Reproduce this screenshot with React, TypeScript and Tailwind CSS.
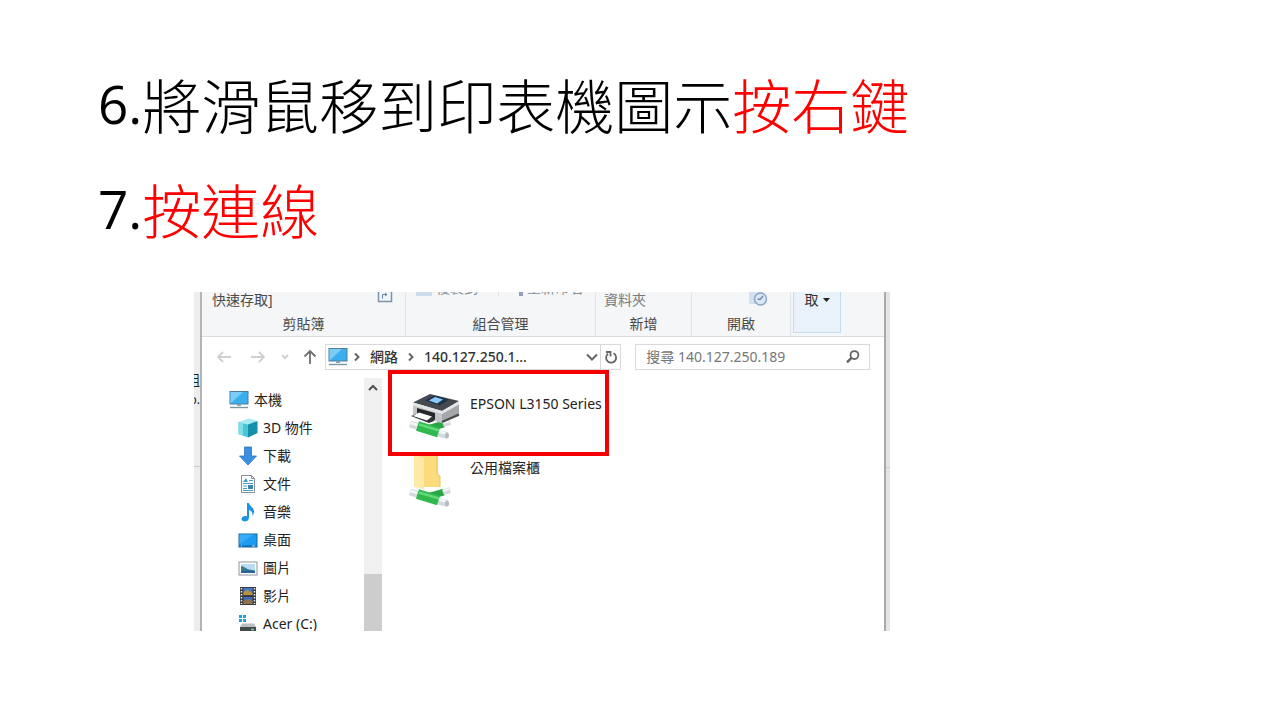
import type { ReactNode } from "react";

const Monitor = ({ className }: { className?: string }) => (
  <svg viewBox="0 0 20 18" className={className} aria-hidden="true">
    <rect x="1" y="0.5" width="18" height="12.5" fill="#3aaeee" stroke="#4d7f9e" />
    <path d="M1.5 12.5V1H14z" fill="#7cccf8" />
    <path d="M8 13h4v2H8z" fill="#8ba3b1" />
    <path d="M1 16.5h18" stroke="#7c95a3" strokeWidth="1.4" />
  </svg>
);

const Cube = () => (
  <svg viewBox="0 0 20 20" className="size-5" aria-hidden="true">
    <path d="M0.500 4L11 0.500 19.500 3 10 6.500z" fill="#a6ecf2" />
    <path d="M0.500 4L10 6.500v13L0.500 16z" fill="#49c5d8" />
    <path d="M0.500 4l4.500 1.200v12.500L0.500 16z" fill="#83dce6" />
    <path d="M10 6.500L19.500 3v12L10 19.500z" fill="#168fa8" />
  </svg>
);

const Download = () => (
  <svg viewBox="0 0 20 20" className="size-5" aria-hidden="true">
    <path d="M6.500 1h7v9h5L10 19 1.500 10h5z" fill="#3a8fe0" stroke="#2f74bd" strokeWidth="0.8" />
  </svg>
);

const Doc = () => (
  <svg viewBox="0 0 20 20" className="size-5" aria-hidden="true">
    <path d="M3.500 1.500h10l3 3v14h-13z" fill="#fff" stroke="#8a8f93" />
    <path d="M13.500 1.500v3h3" fill="none" stroke="#8a8f93" />
    <path d="M5 8l3-4 2 4z" fill="#3b9dc9" />
    <path d="M5 9.500h10M11 6.500h4M5 12h4M5 14.500h4M5 16.500h10" stroke="#4b9dc0" strokeWidth="1.2" />
    <path d="M10 11h5v4h-5z" fill="#3b86ad" />
  </svg>
);

const Note = () => (
  <svg viewBox="0 0 20 20" className="size-5" aria-hidden="true">
    <path d="M9 1h2c.5 3 5 4.500 5 8.500 0 2-.8 3.500-1.800 4.500.8-3-.2-5-3.200-6v7.500C11 18 9 19.500 6.800 19.500 4.800 19.500 3.500 18.500 3.500 17c0-2 2.500-3.300 5.500-2.800z" fill="#1b95e0" />
  </svg>
);

const Desktop = () => (
  <svg viewBox="0 0 20 20" className="size-5" aria-hidden="true">
    <rect x="1" y="4" width="18" height="13" fill="#1c9bf0" stroke="#17699f" />
    <path d="M1.500 14V4.500H16z" fill="#38acf6" />
    <path d="M1.500 16h17" stroke="#0d5f9c" />
    <path d="M3 16h1M14 16h3" stroke="#bfe4ff" />
  </svg>
);

const Picture = () => (
  <svg viewBox="0 0 20 20" className="size-5" aria-hidden="true">
    <rect x="1" y="4" width="18" height="13" fill="#fff" stroke="#8f959a" />
    <rect x="3" y="6" width="14" height="9" fill="#b9dcf3" />
    <path d="M3 8c3 0 5 3 8 3.500l6 1v2.500H3z" fill="#3a7c8e" />
    <path d="M3 13c5-1 9-.5 14 0v2H3z" fill="#2a62a0" />
  </svg>
);

const Film = () => (
  <svg viewBox="0 0 20 20" className="size-5" aria-hidden="true">
    <rect x="2" y="1" width="16" height="18" fill="#393b40" />
    <path d="M3.500 2v16M16.500 2v16" stroke="#e7e7e7" strokeWidth="1.500" strokeDasharray="1.500 1.500" />
    <rect x="5.500" y="2" width="9" height="7" fill="#4a79c9" />
    <path d="M5.500 6l4-2 5 3v2h-9z" fill="#b99440" />
    <rect x="5.500" y="11" width="9" height="7" fill="#3d68bd" />
    <path d="M5.500 15l5-2 4 2v3h-9z" fill="#927345" />
  </svg>
);

const Drive = () => (
  <svg viewBox="0 0 20 20" className="size-5" aria-hidden="true">
    <path d="M1 1h3v3H1zM5 1h3v3H5zM1 5h3v3H1zM5 5h3v3H5z" fill="#1ba1e8" />
    <path d="M4 9.500h12l2 3.500H2z" fill="#b9bfc2" />
    <rect x="2" y="13" width="16" height="5" fill="#45494c" />
    <path d="M13 15.500h3" stroke="#5be08a" strokeWidth="1.500" />
  </svg>
);

// network pipe shown under shared items
const Pipe = () => (
  <g>
    <path d="M20 8L34 4" stroke="#2aa546" strokeWidth="7" />
    <path d="M33 4.500L40 2" stroke="#d3d9dc" strokeWidth="6" />
    <path d="M33 3L39 1" stroke="#f5f8f9" strokeWidth="2" />
    <path d="M0 4l8 2.500M28 13l9 2.500" stroke="#d3d9dc" strokeWidth="7" />
    <path d="M0.500 3l7 2M29 11.500l7 2" stroke="#f5f8f9" strokeWidth="2.500" />
    <ellipse cx="37" cy="15.500" rx="2" ry="3" fill="#b4bdc3" />
    <path d="M7.500 6l21 6.500" stroke="#31b84f" strokeWidth="10" strokeLinejoin="round" />
    <path d="M9 4.500l20 6" stroke="#5fd97a" strokeWidth="2.500" />
  </g>
);

const Printer = () => (
  <svg viewBox="0 0 52 48" className="h-12 w-[52px] shrink-0" aria-hidden="true">
    <g transform="translate(2 28)">
      <Pipe />
    </g>
    <path d="M5 11l29 8v12L5 24z" fill="#c3c6c9" />
    <path d="M34 19l17-7v12L34 31z" fill="#a5a7aa" />
    <path d="M5 10.500L22 2l29 7-17 10z" fill="#454a50" />
    <path d="M5 10.500L34 19l17-9.500v3L34 22 5 13.500z" fill="#e3e5e7" />
    <path d="M17 8.500l9-5 15 4-9 6z" fill="#203448" />
    <path d="M21 8.500l6-3.500 8 2.500-6 4z" fill="#8ccbff" />
    <path d="M9 16l18 5v7L9 23z" fill="#26292c" />
    <path d="M3 24l8-3 15 4v4l-5 2z" fill="#303437" />
    <path d="M5 24l6-3.500 13 4-5 4z" fill="#fff" />
    <path d="M34 30l17-7.500" stroke="#484b4e" strokeWidth="2" />
  </svg>
);

const Folder = () => (
  <svg viewBox="0 0 44 52" className="h-[52px] w-11 shrink-0" aria-hidden="true">
    <path d="M6 0h24v18l2 3v10H13z" fill="#fbdc7c" />
    <path d="M6 0h5l5 2v31L6 31z" fill="#ffe9a6" />
    <path d="M29 0v18l3 2v11" fill="none" stroke="#e9c45b" />
    <g transform="translate(2 32)">
      <Pipe />
    </g>
  </svg>
);

const places = [
  { name: "3D 物件", icon: <Cube /> },
  { name: "下載", icon: <Download /> },
  { name: "文件", icon: <Doc /> },
  { name: "音樂", icon: <Note /> },
  { name: "桌面", icon: <Desktop /> },
  { name: "圖片", icon: <Picture /> },
  { name: "影片", icon: <Film /> },
  { name: "Acer (C:)", icon: <Drive /> },
];

const RibbonGroup = ({
  label,
  className,
  children,
}: {
  label: string;
  className: string;
  children: ReactNode;
}) => (
  <div className={`flex flex-col border-r border-[#e2e4e7] ${className}`}>
    <div className="flex h-4 justify-between px-2">{children}</div>
    <p className="mt-1 text-center leading-6">{label}</p>
  </div>
);

const Ribbon = () => (
  <div className="flex h-[45px] overflow-hidden border-b border-[#d9dbde] bg-[#f4f6f8] text-[#4a4a4a]">
    <RibbonGroup label="剪貼簿" className="w-[204px]">
      <span className="pl-[2px] leading-4">快速存取]</span>
      <svg viewBox="0 0 16 12" className="mr-1 h-3 w-4" aria-hidden="true">
        <path d="M1.500 0v9.500h13V0" fill="#f1f6fb" stroke="#7c93ad" strokeWidth="1.500" />
        <path d="M5.500 6.500V2.500h4M8 1l2 1.500L8 4" fill="none" stroke="#6483a8" />
      </svg>
    </RibbonGroup>
    <RibbonGroup label="組合管理" className="w-[190px]">
      <div className="flex h-1 grow items-end overflow-hidden whitespace-nowrap pl-[2px] text-[#8a8f96]">
        <span className="h-1 w-4 shrink-0 bg-[#cfdcec]" />
        <span className="ml-1 leading-4">複製到</span>
        <span className="ml-5 h-1 w-px shrink-0 bg-[#dcdee1]" />
        <span className="ml-5 h-1 w-1 shrink-0 bg-[#8f9db5]" />
        <span className="ml-1 leading-4">重新命名</span>
      </div>
    </RibbonGroup>
    <RibbonGroup label="新增" className="w-[96px]">
      <span className="leading-4 text-[#77797c]">資料夾</span>
    </RibbonGroup>
    <RibbonGroup label="開啟" className="w-[99px]">
      <svg viewBox="0 0 20 15" className="ml-auto mr-[14px] h-[15px] w-5" aria-hidden="true">
        <path d="M1 0h14v12H1z" fill="#d3e0f1" />
        <circle cx="12.500" cy="7" r="6" fill="#dce6f2" stroke="#8fa5c4" strokeWidth="1.500" />
        <path d="M15 4l-3 3.500L9.500 7" fill="none" stroke="#7189ad" strokeWidth="1.500" />
      </svg>
    </RibbonGroup>
    <button className="mb-[3px] ml-[2px] flex w-[48px] items-start justify-center gap-1 border border-t-0 border-[#c4dcee] bg-[#e9f2fa] leading-4 text-[#333]">
      取
      <svg viewBox="0 0 7 4" className="mt-[6px] h-1 w-[7px]" aria-hidden="true">
        <path d="M0 0h7L3.500 4z" fill="#222" />
      </svg>
    </button>
  </div>
);

const Chevron = ({ d, className }: { d: string; className: string }) => (
  <svg viewBox="0 0 10 10" className={className} fill="none" stroke="currentColor" strokeWidth="2" aria-hidden="true">
    <path d={d} />
  </svg>
);

const NavArrow = ({ label, d, className }: { label: string; d: string; className: string }) => (
  <button aria-label={label} className={className}>
    <svg viewBox="0 0 16 16" className="size-4" fill="none" stroke="currentColor" strokeWidth="1.800" aria-hidden="true">
      <path d={d} />
    </svg>
  </button>
);

const AddressBar = () => (
  <div className="flex items-center px-[14px] pt-[7px]">
    <NavArrow label="上一頁" className="text-[#cfcfcf]" d="M15 8H2M7 3L2 8l5 5" />
    <NavArrow label="下一頁" className="ml-[18px] text-[#cfcfcf]" d="M1 8h13M9 3l5 5-5 5" />
    <button aria-label="最近的位置" className="ml-[14px] text-[#d0d0d0]">
      <Chevron d="M2 3l3 3 3-3" className="size-[10px]" />
    </button>
    <NavArrow label="上一層" className="ml-3 text-[#6f6f6f]" d="M8 15V2M2.500 7.500L8 2l5.500 5.500" />
    <div className="ml-[7px] flex h-[26px] w-[298px] items-center border border-[#d9d9d9] font-medium text-[#333]">
      <Monitor className="ml-[2px] h-[18px] w-5" />
      <Chevron d="M3 1.500L6.500 5 3 8.500" className="ml-1 size-[10px] text-[#666]" />
      <span className="ml-2">網路</span>
      <Chevron d="M3 1.500L6.500 5 3 8.500" className="ml-2 size-[10px] text-[#666]" />
      <span className="ml-2">140.127.250.1...</span>
      <button aria-label="先前的位置" className="ml-auto mr-[2px] text-[#666]">
        <svg viewBox="0 0 12 8" className="h-2 w-3" fill="none" stroke="currentColor" strokeWidth="2" aria-hidden="true">
          <path d="M1 1.500l5 5 5-5" />
        </svg>
      </button>
      <button aria-label="重新整理" className="flex h-full w-5 items-center justify-center border-l border-[#d9d9d9] text-[#666]">
        <svg viewBox="0 0 14 14" className="size-[14px]" fill="none" stroke="currentColor" strokeWidth="1.800" aria-hidden="true">
          <path d="M9.500 3.300A5 5 0 1 1 4 3.800M2 2h4.500v4.500" />
        </svg>
      </button>
    </div>
    <label className="ml-[14px] flex h-[26px] min-w-0 grow items-center border border-[#d9d9d9] pl-[10px] pr-2">
      <input
        aria-label="搜尋"
        placeholder="搜尋 140.127.250.189"
        className="min-w-0 grow bg-transparent outline-none placeholder:text-[#777]"
      />
      <svg viewBox="0 0 16 16" className="size-4" fill="none" stroke="#666" aria-hidden="true">
        <circle cx="9.500" cy="6" r="4" strokeWidth="1.800" />
        <path d="M6.500 9L2 13.500" strokeWidth="2.500" />
      </svg>
    </label>
  </div>
);

const Sidebar = () => (
  <div className="flex w-[180px] shrink-0">
    <nav className="grow pt-4">
      <a href="#pc" className="ml-[27px] flex h-7 items-center gap-[5px]">
        <Monitor className="h-[18px] w-5" />
        本機
      </a>
      {places.map(({ name, icon }) => (
        <a key={name} href={`#${name}`} className="ml-9 flex h-7 items-center gap-[5px]">
          {icon}
          {name}
        </a>
      ))}
    </nav>
    <div className="mt-2 flex w-[18px] flex-col bg-[#f0f0f0]">
      <button aria-label="向上捲動" className="flex h-5 items-center justify-center text-[#505050]">
        <Chevron d="M1 7l4-4 4 4" className="size-[10px]" />
      </button>
      <div className="mt-44 grow bg-[#cdcdcd]" />
    </div>
  </div>
);

const Files = () => (
  <div className="flex grow flex-col items-start pl-[6px]">
    <a href="#printer" className="flex h-[86px] w-[221px] border-4 border-[#f40000] pl-4 pt-[18px]">
      <Printer />
      <span className="ml-[10px] whitespace-nowrap leading-6">EPSON L3150 Series</span>
    </a>
    <a href="#cabinet" className="ml-5 flex">
      <Folder />
      <span className="ml-[18px] leading-6">公用檔案櫃</span>
    </a>
  </div>
);

const Step = ({ num, children }: { num: string; children: ReactNode }) => (
  <span className="flex h-[105px] items-center">
    <span className="font-['Open_Sans',sans-serif] text-[53px] font-normal">{num}</span>
    <span>{children}</span>
  </span>
);

const App = () => {
  return (
    <main className="min-h-screen bg-white pt-[51px]">
      <h1 className="ml-[98px] font-['Noto_Sans_CJK_TC',sans-serif] text-[59px] font-light leading-none text-black">
        <Step num="6.">
          將滑鼠移到印表機圖示<span className="text-[#ff0000]">按右鍵</span>
        </Step>
        <Step num="7.">
          <span className="text-[#ff0000]">按連線</span>
        </Step>
      </h1>
      <section className="ml-[194px] mt-[31px] flex max-h-[339px] w-full max-w-[696px] overflow-hidden font-['Noto_Sans','Noto_Sans_CJK_TC',sans-serif] text-sm text-[#222]">
        <div className="flex w-2 shrink-0 flex-col items-end overflow-hidden border-r-2 border-[#b4b4b4] bg-[#ededed] pt-[78px]">
          <span className="leading-5">組</span>
          <span className="text-xs leading-5">o.</span>
          <span className="mt-14 h-px w-full bg-[#cfcfcf]" />
        </div>
        <div className="min-w-0 grow bg-white">
          <Ribbon />
          <AddressBar />
          <div className="flex">
            <Sidebar />
            <Files />
          </div>
        </div>
        <div className="w-[6px] shrink-0 border-l-2 border-[#a9a9a9] bg-[#e4e4e4] pt-[175px]">
          <div className="h-px bg-[#cfcfcf]" />
        </div>
      </section>
    </main>
  );
};

export default App;
